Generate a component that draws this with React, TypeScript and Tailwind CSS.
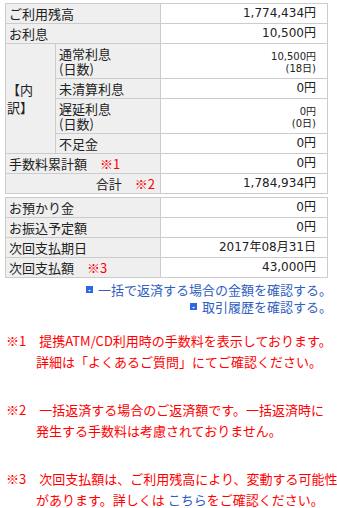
const lbl =
  "border border-[#cccccc] bg-[image:repeating-conic-gradient(#dedede_0%_25%,#ffffff_0%_50%)] bg-[length:2px_2px] px-[3px] py-0 text-left align-middle text-[13px] leading-[15px] text-[#222]";
const val =
  "border border-[#cccccc] bg-white pr-[11px] pl-1 py-0 text-right align-middle text-[12px] leading-[15px] text-[#222] [font-family:'DejaVu_Sans','Noto_Sans_CJK_JP',sans-serif]";
const small =
  "border border-[#cccccc] bg-white pr-[11px] pl-1 pt-[3px] pb-0 text-right align-middle text-[10px] leading-[12px] text-[#222] [font-family:'DejaVu_Sans','Noto_Sans_CJK_JP',sans-serif]";

const Mark = ({ n }: { n: string }) => <span className="text-[#ff0000]">※{n}</span>;

const LinkIcon = () => (
  <svg width="7" height="7" viewBox="0 0 7 7" className="mr-[5px] inline-block">
    <rect width="7" height="7" fill="#2f66e6" />
    <path d="M2 4h3L3.5 5.5z" fill="#ffffff" />
  </svg>
);

export default function App() {
  return (
    <div className="w-[337px] min-h-[508px] overflow-hidden bg-white pt-[3px] [font-family:'Noto_Sans_CJK_JP',sans-serif]">
      <table className="ml-[5px] w-[322px] table-fixed border-collapse">
        <colgroup>
          <col className="w-[50px]" />
          <col className="w-[105px]" />
          <col className="w-[167px]" />
        </colgroup>
        <tbody>
          <tr className="h-[20px]">
            <td colSpan={2} className={lbl}>ご利用残高</td>
            <td className={val}>1,774,434円</td>
          </tr>
          <tr className="h-[20px]">
            <td colSpan={2} className={lbl}>お利息</td>
            <td className={val}>10,500円</td>
          </tr>
          <tr className="h-[35px]">
            <td rowSpan={4} className={`${lbl} !px-[1px] !leading-[18px]`}>
              【内<br />訳】
            </td>
            <td className={lbl}>
              通常利息<br />(日数)
            </td>
            <td className={small}>
              10,500円<br />(18日)
            </td>
          </tr>
          <tr className="h-[20px]">
            <td className={lbl}>未清算利息</td>
            <td className={val}>0円</td>
          </tr>
          <tr className="h-[35px]">
            <td className={lbl}>
              遅延利息<br />(日数)
            </td>
            <td className={small}>
              0円<br />(0日)
            </td>
          </tr>
          <tr className="h-[20px]">
            <td className={lbl}>不足金</td>
            <td className={val}>0円</td>
          </tr>
          <tr className="h-[20px]">
            <td colSpan={2} className={lbl}>
              手数料累計額　<Mark n="1" />
            </td>
            <td className={val}>0円</td>
          </tr>
          <tr className="h-[20px]">
            <td colSpan={2} className={`${lbl} !text-right !pr-[5px]`}>
              合計　<Mark n="2" />
            </td>
            <td className={val}>1,784,934円</td>
          </tr>
        </tbody>
      </table>

      <table className="ml-[5px] mt-[3px] w-[322px] table-fixed border-collapse">
        <colgroup>
          <col className="w-[155px]" />
          <col className="w-[167px]" />
        </colgroup>
        <tbody>
          <tr className="h-[20px]">
            <td className={lbl}>お預かり金</td>
            <td className={val}>0円</td>
          </tr>
          <tr className="h-[20px]">
            <td className={lbl}>お振込予定額</td>
            <td className={val}>0円</td>
          </tr>
          <tr className="h-[20px]">
            <td className={lbl}>次回支払期日</td>
            <td className={val}>2017年08月31日</td>
          </tr>
          <tr className="h-[20px]">
            <td className={lbl}>
              次回支払額　<Mark n="3" />
            </td>
            <td className={val}>43,000円</td>
          </tr>
        </tbody>
      </table>

      <div className="mt-[3px] flex flex-col items-end pr-[5px] text-[13px] leading-[17px] text-[#3060c0]">
        <a className="flex items-center">
          <LinkIcon />
          一括で返済する場合の金額を確認する。
        </a>
        <a className="flex items-center">
          <LinkIcon />
          取引履歴を確認する。
        </a>
      </div>

      <div className="mt-[15px] flex flex-col gap-[27px] text-[13px] leading-[21px] text-[#ff0000]">
        <p className="whitespace-nowrap pl-[36px] [text-indent:-30px]">
          ※1　提携ATM/CD利用時の手数料を表示しております。
          <br />
          詳細は「よくあるご質問」にてご確認ください。
        </p>
        <p className="whitespace-nowrap pl-[36px] [text-indent:-30px]">
          ※2　一括返済する場合のご返済額です。一括返済時に
          <br />
          発生する手数料は考慮されておりません。
        </p>
        <p className="whitespace-nowrap pl-[36px] [text-indent:-30px]">
          ※3　次回支払額は、ご利用残高により、変動する可能性
          <br />
          があります。詳しくは <a className="text-[#2a5cc8]">こちら</a>をご確認ください。
        </p>
      </div>
    </div>
  );
}
